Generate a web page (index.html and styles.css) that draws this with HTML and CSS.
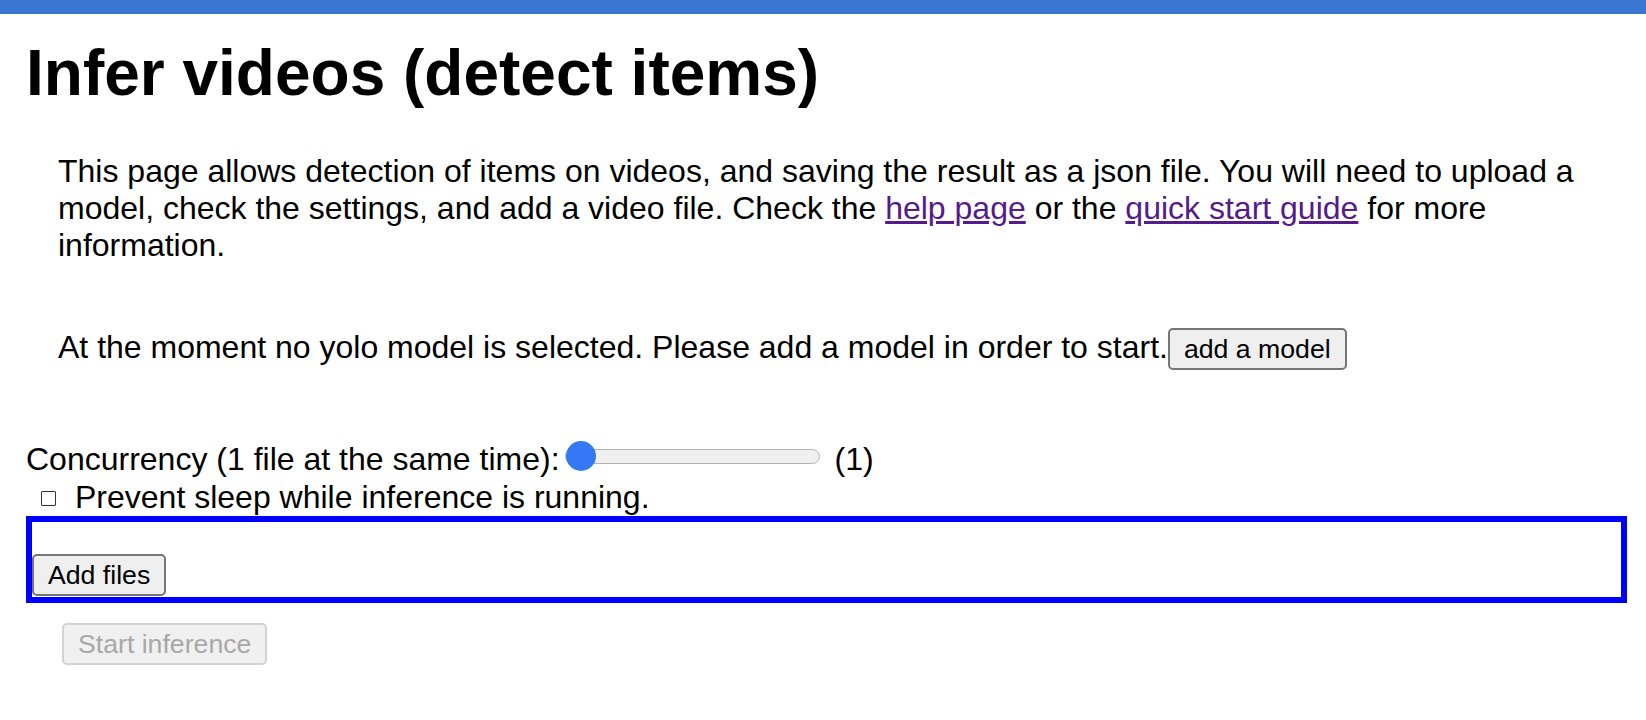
FILE: index.html
```html
<!DOCTYPE html>
<html lang="en">
<head>
    <meta charset="UTF-8">
    <meta name="viewport" content="width=device-width, initial-scale=1.0">
    <title>Infer videos (detect items)</title>
    <link rel="stylesheet" href="styles.css">
</head>
<body>
    <div class="topbar"></div>

    <main class="page">
        <h1>Infer videos (detect items)</h1>

        <p class="intro">
            This page allows detection of items on videos, and saving the result as a json file. You will need to upload a
            model, check the settings, and add a video file. Check the <a href="help.html">help page</a> or the <a href="quickstart.html">quick start guide</a> for more
            information.
        </p>

        <p class="model-notice">At the moment no yolo model is selected. Please add a model in order to start.<button type="button" class="btn">add a model</button></p>

        <div class="concurrency">
            <label for="concurrency">Concurrency (1 file at the same time):</label>
            <input type="range" id="concurrency" min="1" max="8" value="1">
            <span>(1)</span>
        </div>

        <div class="sleep-option">
            <input type="checkbox" id="preventSleep">
            <label for="preventSleep">Prevent sleep while inference is running.</label>
        </div>

        <div class="drop-zone">
            <button type="button" class="btn">Add files</button>
        </div>

        <button type="button" class="btn start-btn" disabled>Start inference</button>
    </main>
</body>
</html>
```

FILE: styles.css
```css
:root {
    --bar-blue: #3a77d5;
    --drop-blue: #0000ff;
    --link: #551a8b;
    --btn-bg: #efefef;
    --btn-border: #767676;
}

* {
    box-sizing: border-box;
}

body {
    margin: 0;
    font-family: 'Liberation Sans', Arial, sans-serif;
    font-size: 32px;
    line-height: 37px;
    color: #000;
    background: #fff;
}

.topbar {
    height: 14px;
    background: var(--bar-blue);
}

.page {
    padding: 0 19px 0 26px;
}

h1 {
    font-size: 64px;
    line-height: 74px;
    font-weight: bold;
    margin: 22px 0 0;
}

.intro {
    margin: 43px 0 0;
    padding-left: 32px;
}

.intro a {
    color: var(--link);
}

.model-notice {
    margin: 64px 0 0;
    padding-left: 32px;
}

/* buttons */
.btn {
    font-family: 'Liberation Sans', Arial, sans-serif;
    font-size: 26.67px;
    height: 42px;
    padding: 0 14px;
    color: #000;
    background: var(--btn-bg);
    border: 2px solid var(--btn-border);
    border-radius: 5px;
    cursor: pointer;
}

.btn:disabled {
    color: #a8a8a8;
    background: #f0f0f0;
    border-color: #d3d3d3;
    cursor: default;
}

/* concurrency slider */
.concurrency {
    display: flex;
    align-items: flex-start;
    margin-top: 71px;
}

.concurrency input[type="range"] {
    -webkit-appearance: none;
    appearance: none;
    width: 255px;
    height: 30px;
    margin: 0 15px 0 5px;
    background: transparent;
}

.concurrency input[type="range"]::-webkit-slider-runnable-track {
    height: 15px;
    background: #efefef;
    border: 1.5px solid #b3b3b3;
    border-radius: 8px;
}

.concurrency input[type="range"]::-webkit-slider-thumb {
    -webkit-appearance: none;
    width: 30px;
    height: 30px;
    margin-top: -9px;
    border-radius: 50%;
    background: #3478f6;
    border: none;
}

/* checkbox row */
.sleep-option {
    display: flex;
    align-items: flex-start;
    margin-top: 1px;
}

.sleep-option input[type="checkbox"] {
    -webkit-appearance: none;
    appearance: none;
    width: 15px;
    height: 15px;
    margin: 12px 19px 0 15px;
    border: 1.5px solid #333;
    border-radius: 1px;
    background: #fff;
}

.sleep-option input[type="checkbox"]:checked {
    background: #333;
}

.drop-zone {
    display: flex;
    margin-top: 0;
    padding: 32px 0 1px;
    border: 6px solid var(--drop-blue);
}

.start-btn {
    display: block;
    margin: 20px 0 0 36px;
}
```
